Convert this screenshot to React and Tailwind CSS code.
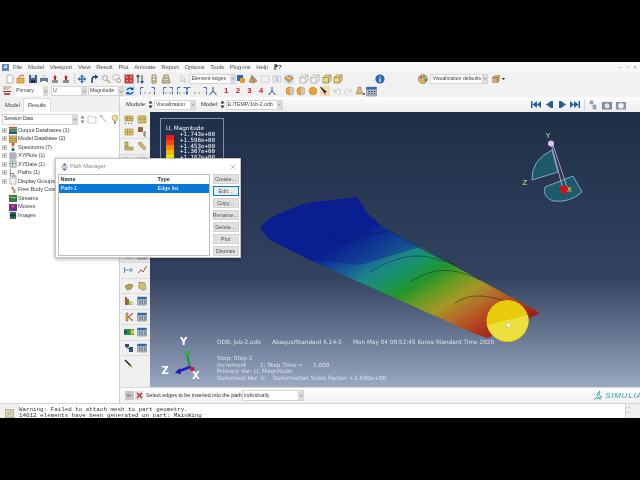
import React from "react";

const S = ({ w = 10, h = 10, children, className = "" }) => (
  <svg width={w} height={h} viewBox="0 0 10 10" className={"shrink-0 " + className}>{children}</svg>
);

const icons = {
  doc: <path d="M2 1h4l2 2v6H2z" fill="#fff" stroke="#9aa3ad" strokeWidth=".8" />,
  open: <><path d="M1 4h7v5H1z" fill="#f0b040" stroke="#c06a20" strokeWidth=".6" /><path d="M3 3c1-2 3-2 5-1" stroke="#c9302c" fill="none" strokeWidth=".9" /></>,
  save: <><path d="M1 1h8v8H1z" fill="#44618a" /><path d="M3 1h4v3H3z" fill="#cfd8e3" /><path d="M3 6h4v3H3z" fill="#20324e" /></>,
  print: <><path d="M1 4h8v4H1z" fill="#66788f" /><path d="M3 1h4v3H3z" fill="#ddd" /><path d="M3 7h4v2H3z" fill="#fff" /></>,
  upr: <><path d="M2 6h6v3H2z" fill="#8d8f96" /><path d="M5 1l2 2.500H6V6H4V3.500H3z" fill="#c62b2b" /></>,
  move: <path d="M5 .5L7 3H5.700v1.300H7V3l2.500 2L7 7V5.700H5.700V7H7L5 9.500 3 7h1.300V5.700H3V7L.5 5 3 3v1.300h1.300V3H3z" fill="#3d6ea8" />,
  rot: <><path d="M3 9V6c0-2 1.500-3.500 3.500-3.500" stroke="#143f7a" strokeWidth="1.500" fill="none" /><path d="M6 .5L9.500 3 6 5z" fill="#143f7a" /></>,
  mag: <><circle cx="4" cy="4" r="2.500" fill="#eef" stroke="#a5a5a5" /><path d="M6 6l3 3" stroke="#b7a270" strokeWidth="1.400" /></>,
  box: <><path d="M1 1h6v5H1z" fill="none" stroke="#b9b9c9" strokeWidth=".8" /><circle cx="6.500" cy="6.500" r="2" fill="#fff" stroke="#999" /></>,
  fit: <><path d="M.5.500h9v9h-9z" fill="#c93a3a" /><path d="M2 2l2 2M8 2L6 4M2 8l2-2M8 8L6 6" stroke="#fff" strokeWidth=".8" /></>,
  flip: <path d="M3 1v8M1.500 3L3 1l1.500 2M7 1v8M5.500 7L7 9l1.500-2" stroke="#34506e" strokeWidth="1.100" fill="none" />,
  col: <path d="M3 1h4M3 4h4M3 7h4M3 9h4M3 1v8M7 1v8" stroke="#8f7c3c" strokeWidth=".9" fill="none" />,
  col2: <path d="M3 1h4l2 8H1zM2.500 4h5M2 7h6" stroke="#8c8268" strokeWidth=".9" fill="#d9d3bd" />,
  cur: <path d="M3 1v7l2-1.500L6.500 9 7.500 8.500 6 6l2-.5z" fill="#eee" stroke="#b4b4b4" strokeWidth=".6" />,
  pal: <><path d="M1 1h6v6H1z" fill="#2d67ad" /><path d="M4 4h5v5H4z" fill="#e9a11f" /></>,
  hat: <><path d="M1 8l3-7 5 6-3 2z" fill="#c8a468" stroke="#8a6a38" strokeWidth=".5" /><path d="M3 4l4 4M4 2.500l4 4" stroke="#7f5a2a" strokeWidth=".6" /></>,
  dash: <path d="M1 2h8v6H1z" fill="none" stroke="#c1c6cc" strokeWidth=".9" strokeDasharray="1.500 .7" />,
  tb: <><path d="M1 2h8v6H1z" fill="#f5f5f5" stroke="#aeb4ba" strokeWidth=".7" /><path d="M3 4h4M3 6h4" stroke="#7b8aa0" strokeWidth=".7" /></>,
  pkg: <><path d="M0 0h10v10H0z" fill="#cfe4f4" /><path d="M.5 4L5 1.500 9.500 4 5 8.500z" fill="#d89a4a" stroke="#8e5c24" strokeWidth=".5" /><path d="M3 3l4 2" stroke="#f4e3bb" /></>,
  cube: <path d="M1 3.500L3.500 1H9v5.500L6.500 9H1zM1 3.500h5.500V9M6.500 3.500L9 1" fill="none" stroke="#a9b0a3" strokeWidth=".8" />,
  cubey: <><path d="M1 3.500L3.500 1H9v5.500L6.500 9H1z" fill="#e9d38d" /><path d="M1 3.500L3.500 1H9v5.500L6.500 9H1zM1 3.500h5.500V9M6.500 3.500L9 1" fill="none" stroke="#8e7a35" strokeWidth=".7" /></>,
  cubet: <><path d="M1 3.500L3.500 1H9v5.500L6.500 9H1z" fill="#c9ad7d" /><path d="M1 3.500h5.500V9M6.500 3.500L9 1" fill="none" stroke="#7e6338" strokeWidth=".7" /></>,
  info: <><circle cx="5" cy="5" r="4.600" fill="#2f66b3" /><path d="M5 2.200v1M5 4.200V8" stroke="#fff" strokeWidth="1.200" /></>,
  paint: <><circle cx="5" cy="5" r="4.500" fill="#d8b27c" stroke="#6d5a3a" strokeWidth=".5" /><circle cx="3" cy="3.500" r="1" fill="#d22" /><circle cx="6" cy="2.800" r="1" fill="#29a" /><circle cx="7.500" cy="6" r="1" fill="#262" /><circle cx="4" cy="7" r="1" fill="#ea2" /></>,
  view: <><path d="M1 1h8M1 3h6" stroke="#b9803a" strokeWidth=".9" /><path d="M1 5h8v1H1z" fill="#444" /><path d="M2 7h6v2H2z" fill="#d04a4a" /></>,
  sync: <><path d="M0 0h10v10H0z" fill="#cbe4f6" /><path d="M2 4c1-2 4-2.500 6-1M8 6c-1 2-4 2.500-6 1" stroke="#174d9b" strokeWidth="1.200" fill="none" /><path d="M8.500 1v3H5.500zM1.500 9V6h3z" fill="#174d9b" /></>,
  tri: <path d="M5 1v4M5 5L1.500 9M5 5l3.500 4" stroke="#395f96" strokeWidth="1.100" fill="none" />,
  ball: <><circle cx="5" cy="5" r="4" fill="#eea72a" stroke="#9c6a18" strokeWidth=".5" /><path d="M5 1a4 4 0 010 8z" fill="#c9c9c0" /></>,
  ball2: <circle cx="5" cy="5" r="3.800" fill="#efa325" stroke="#a76f14" strokeWidth=".5" />,
  pick: <><path d="M0 0h10v10H0z" fill="#f2dab4" /><path d="M1 1l6 5-2 .5 1 3-6-8.500z" fill="#222" /></>,
  undo: <path d="M2 3v3h3M2.500 5.500C4 2.500 7.500 2.500 8.500 5 9 7 7.500 8.500 6 9" stroke="#bebebe" fill="none" strokeWidth=".9" />,
  redo: <path d="M8 3v3H5M7.500 5.500C6 2.500 2.500 2.500 1.500 5 1 7 2.500 8.500 4 9" stroke="#cfcfcf" fill="none" strokeWidth=".9" />,
  bot: <><path d="M3 1h3v2l2 5H1l2-5z" fill="#d9b878" stroke="#8a7340" strokeWidth=".5" /><path d="M8 7h2v2H8z" fill="#7a6a3a" /></>,
  tab: <><path d="M.5 1h9v8h-9z" fill="#b6becb" stroke="#5e6c80" strokeWidth=".5" /><path d="M.5 1h9v2.200h-9z" fill="#2e6ab0" /><path d="M2 5h1.500M4.500 5H6M7 5h1.500M2 7h1.500M4.500 7H6M7 7h1.500" stroke="#3a3f49" strokeWidth=".9" /></>,
  m1: <><path d="M1 1h8v5H1z" fill="#e3c868" stroke="#7f6b21" strokeWidth=".5" /><path d="M1 3.500h8M3.500 1v5M6 1v5" stroke="#7f6b21" strokeWidth=".5" /><path d="M1 8.500h1M4 8.500h1M7 8.500h1" stroke="#555" /></>,
  m2: <><path d="M1 1h8v7H1z" fill="#e8cf76" stroke="#7f6b21" strokeWidth=".5" /><path d="M1 4h8M4 1v7M7 1v7" stroke="#7f6b21" strokeWidth=".5" /></>,
  m3: <><path d="M1 2h8v6H1z" fill="#ecd475" stroke="#7f6b21" strokeWidth=".5" /><path d="M1 5h8M3.500 2v6M6 2v6" stroke="#7f6b21" strokeWidth=".5" /></>,
  m4: <><path d="M1 0h5v5H1z" fill="#c94f3a" /><path d="M1 2.500h5" stroke="#3a8c3a" strokeWidth="1.500" /><path d="M7 5h2M7 7h2M7 9h2M7 5v4" stroke="#33595a" strokeWidth=".8" /></>,
  a1: <><path d="M1 1h3v7H1z" fill="#cdb769" stroke="#7a6b34" strokeWidth=".5" /><path d="M1 6h8v3H1z" fill="#cdb769" stroke="#7a6b34" strokeWidth=".5" /></>,
  a2: <path d="M1 2l3-1 5 6-2 2-5-5z" fill="#cdb769" stroke="#7a6b34" strokeWidth=".5" />,
  arr: <path d="M.5 2v6M1 5h7M6 3l2.500 2L6 7" stroke="#4c72a8" strokeWidth=".8" fill="none" />,
  ch: <><path d="M1 8l3-3 2 2 3-5" stroke="#c23a57" strokeWidth="1" fill="none" /><circle cx="4" cy="5" r=".8" fill="#2d9b3c" /><circle cx="9" cy="2" r=".8" fill="#2d9b3c" /></>,
  y1: <path d="M1 5l4-2 4 1-2 4-4 1z" fill="#b9a24a" stroke="#6b6025" strokeWidth=".5" />,
  y2: <path d="M2 1l6 1 1 6-3 1.500L2 7z" fill="#d8c05c" stroke="#5f7d98" strokeWidth=".6" />,
  leg: <><path d="M1 1h2v8H1z" fill="#e03a2a" /><path d="M3 3h2v6H3z" fill="#36a13a" /><path d="M5 5h2v4H5z" fill="#e9c82f" /><path d="M7 6h2v3H7z" fill="#eef" stroke="#5a7" strokeWidth=".4" /></>,
  k: <path d="M2 1h2v8H2zM4 5l4-4 1 1-4 3 4 3-1 1z" fill="#cdb163" stroke="#8d2a22" strokeWidth=".4" />,
  w: <><path d="M0 2h10v6H0z" fill="#2f9a45" /><path d="M0 3.500h3v3H0z" fill="#1d3e9b" /><path d="M7 2l3 1.500v3L7 8z" fill="#ddc934" /></>,
  bs: <><path d="M1 1h4v3H1z" fill="#2a4e82" /><path d="M5 4h4v5H5z" fill="#2c4f7e" /><path d="M2 4l3 2" stroke="#444" /></>,
  pen: <><path d="M1 1l6 6" stroke="#23262b" strokeWidth="1.600" /><path d="M6 6l3 2-2 1z" fill="#a5c24a" /></>,
};
const I = ({ k, s = 10 }) => <S w={s} h={s}>{icons[k]}</S>;

const Drop = ({ w, children, className = "" }) => (
  <div className={"flex items-center h-[10px] shrink-0 bg-white border border-[#d6d6d6] text-[#444] text-[5.200px] overflow-hidden " + w + " " + className}>
    <span className="flex-1 pl-[1px] whitespace-nowrap overflow-hidden">{children}</span>
    <span className="w-[5px] h-full bg-[#dcdcdc] flex items-center justify-center shrink-0">
      <svg width="4" height="3" viewBox="0 0 4 3"><path d="M.5.500L2 2.500 3.500.500" fill="none" stroke="#777" strokeWidth=".6" /></svg>
    </span>
  </div>
);
const Grip = ({ className = "" }) => <div className={"w-[1px] h-[9px] border-l border-dotted border-[#aaa] shrink-0 " + className} />;
const Spin = () => (
  <svg width="5" height="9" viewBox="0 0 5 9" className="shrink-0"><path d="M.5 3.500L2.500 .5l2 3zM.5 5.500l2 3 2-3z" fill="#333" /></svg>
);

const Bracket = ({ w, className = "" }) => (
  <svg width={w} height="10" viewBox={`0 0 ${w} 10`} className={"shrink-0 " + className}>
    <path d={`M.5 4V1.500h3M${w - 3.5} 1.500h3V4M.5 5v3.500M${w - .5} 5v3.500`} fill="none" stroke="#2a62a8" strokeWidth=".9" />
    <path d={`M${w / 2 - 3} 7h1.500M${w / 2 + 1.500} 7h1.500`} stroke="#555" strokeWidth=".8" />
  </svg>
);

const tree = [
  ["m1x", "Output Databases (1)", 1],
  ["m2x", "Model Database (2)", 1],
  ["spx", "Spectrums (7)", 1],
  ["xyp", "XYPlots (1)", 1],
  ["xyd", "XYData (1)", 1],
  ["pth", "Paths (1)", 1],
  ["dg", "Display Groups (1)", 1],
  ["fb", "Free Body Cuts", 0],
  ["st", "Streams", 0],
  ["mv", "Movies", 0],
  ["im", "Images", 0],
];
const treeIcons = {
  m1x: <><path d="M0 1h9v2H0z" fill="#c44" /><path d="M0 3h9v3H0z" fill="#3a9a4a" /><path d="M0 6h9v3H0z" fill="#2a4f8a" /></>,
  m2x: <><path d="M0 1h9v8H0z" fill="#d8bd62" stroke="#6b5a22" strokeWidth=".6" /><path d="M0 4h9M0 6.500h9" stroke="#6b5a22" strokeWidth=".6" /></>,
  spx: <><path d="M3 0h3v3H3z" fill="#d33" /><path d="M3 3h3v3H3z" fill="#dd3" /><path d="M3 6h3v3H3z" fill="#25a" /></>,
  xyp: <path d="M1 1h7v7H1zM1 3.300h7M1 5.600h7M3.300 1v7M5.600 1v7" fill="#eef" stroke="#5f6b78" strokeWidth=".6" />,
  xyd: <path d="M1 1h7v7H1zM1 4h7M4 1v7" fill="#e6ecef" stroke="#5f6b78" strokeWidth=".7" />,
  pth: <path d="M1.500 0v8h7M1.500 5h4v3" fill="none" stroke="#667" strokeWidth=".9" />,
  dg: <path d="M1 1h7v7H1z" fill="#eee" stroke="#555" strokeWidth=".6" strokeDasharray="1.500 .8" />,
  fb: <path d="M3 1h2v3H3zM5 4h2v4H5z" fill="#b49b5d" stroke="#705" strokeWidth=".2" />,
  st: <><path d="M0 1h9v8H0z" fill="#2f7a45" /><path d="M1 4c3-2 5 2 7 0" stroke="#e4d65c" fill="none" /></>,
  mv: <><path d="M0 1h9v8H0z" fill="#6b2fa5" /><path d="M3 2h3v3H3z" fill="#e24d2a" /></>,
  im: <><path d="M1 1h7v8H1z" fill="#2b6a55" /><path d="M1 5h7" stroke="#1a2f3a" strokeWidth="2" /></>,
};

const Row1 = () => (
  <div className="h-[13px] flex items-center pl-[5px]">
    <div className="flex items-center gap-[1.300px]">
      {["doc", "open", "save", "print", "upr", "upr"].map((k, i) => <I key={i} k={k} />)}
    </div>
    <Grip className="ml-[3px]" />
    <div className="flex items-center gap-[1.600px] ml-[2px]">
      {["move", "rot", "mag", "box", "fit", "flip"].map((k, i) => <I key={i} k={k} />)}
    </div>
    <div className="flex items-center gap-[2px] ml-[4px]"><I k="col" /><I k="col2" /></div>
    <div className="flex items-center gap-[1px] ml-[7px]">
      <I k="cur" />
      <Drop w="w-[47px]">Element edges</Drop>
    </div>
    <div className="flex items-center gap-[1.800px]">
      {["pal", "hat", "dash", "tb", "pkg"].map((k, i) => <I key={i} k={k} />)}
    </div>
    <div className="flex items-center gap-[1.600px] ml-[5px]">
      {["cube", "cube", "cubey", "cubey"].map((k, i) => <I key={i} k={k} />)}
    </div>
    <div className="ml-[32px]"><I k="info" /></div>
    <div className="flex items-center ml-[33px]">
      <I k="paint" />
      <Drop w="w-[58px]" className="ml-[2px]">Visualization defaults</Drop>
      <div className="ml-[3px]"><I k="cubet" /></div>
      <svg width="5" height="4" viewBox="0 0 5 4"><path d="M1 1h3L2.500 3z" fill="#111" /></svg>
    </div>
  </div>
);

const Row2 = () => (
  <div className="h-[12px] flex items-center pl-[2px]">
    <I k="view" />
    <Drop w="w-[33px]" className="ml-[3px] border-0">Primary</Drop>
    <Drop w="w-[36px]" className="ml-[3px]">U</Drop>
    <Drop w="w-[36px]" className="ml-[1px]">Magnitude</Drop>
    <div className="ml-[1px]"><I k="sync" /></div>
    <Bracket w={15} className="ml-[5px]" />
    <Bracket w={10} className="ml-[8px]" />
    <Bracket w={10} className="ml-[4px]" />
    <Bracket w={20} />
    <div className="ml-[1px]"><I k="tri" /></div>
    <div className="flex items-center ml-[2.500px] text-[8px] font-bold text-[#d11f2a]">
      {["1", "2", "3", "4"].map(t => <span key={t} className="w-[11.600px] text-center">{t}</span>)}
    </div>
    <I k="tri" />
    <div className="flex items-center gap-[1.600px] ml-[8px]">
      {["ball", "ball", "ball2"].map((k, i) => <I key={i} k={k} />)}
    </div>
    <div className="flex items-center gap-[1.500px] ml-[2px]">
      {["pick", "undo", "redo", "bot", "tab"].map((k, i) => <I key={i} k={k} s={k === "tab" ? 11 : 10} />)}
    </div>
  </div>
);

const Tri = ({ d }) => (
  <svg width="10" height="7" viewBox="0 0 10 7" className="shrink-0"><path d={d} fill="#2a5f9f" /></svg>
);

const ModuleRow = () => (
  <div className="h-[15px] flex items-center text-[5.800px] text-[#333] bg-gradient-to-b from-[#fdfdfd] to-[#ececec]">
    <span className="ml-[6px] w-[22px] shrink-0">Module:</span>
    <Spin />
    <Drop w="w-[42px]" className="ml-[1px]">Visualization</Drop>
    <span className="ml-[5px] w-[19px] shrink-0">Model:</span>
    <Spin />
    <Drop w="w-[57px]" className="ml-[0.500px]">E:/TEMP/Job-2.odb</Drop>
    <div className="flex items-center gap-[3.300px] ml-[248px]">
      <Tri d="M0 0h1.500v7H0zM6 0v7L1.500 3.500zM10 0v7L6 3.500z" />
      <Tri d="M7 0v7L2 3.500zM7 0h2v7H7z" />
      <Tri d="M2 0h2v7H2zM4 0l5 3.500L4 7z" />
      <Tri d="M0 0l4 3.500L0 7zM4 0l4.500 3.500L4 7zM8.500 0H10v7H8.500z" />
    </div>
    <div className="w-[1px] h-[11px] bg-[#d4d4d4] ml-[4px] shrink-0" />
    <div className="flex items-center gap-[4px] ml-[3px]">
      <S><path d="M2 1h3v3H2zM5 5h3v4H5z" fill="#a3adba" stroke="#778" strokeWidth=".5" /></S>
      <S><path d="M0 2h10v7.500H0z" fill="#7d8ba0" /><circle cx="5" cy="5.700" r="2.500" fill="#dfe5ec" /></S>
      <S><path d="M0 2h10v7.500H0z" fill="#8a94a3" /><circle cx="5" cy="5.700" r="2.800" fill="#eef1f5" /></S>
    </div>
  </div>
);

const LeftPanel = () => (
  <div className="w-[120px] h-[306px] flex flex-col text-[5.700px] tracking-[-0.150px] text-[#444] border-r border-[#cfcfcf] bg-[#f0f0f0]">
    <div className="h-[15px] flex items-end pl-[1px]">
      <div className="h-[13px] px-[4px] flex items-center w-[21px]">Model</div>
      <div className="h-[14px] px-[4px] ml-[1px] flex items-center bg-white border border-b-0 border-[#ddd]">Results</div>
    </div>
    <div className="flex-1 bg-white flex flex-col">
      <div className="h-[14px] flex items-center pl-[2px] shrink-0">
        <Drop w="w-[76px]" className="h-[11px]">Session Data</Drop>
        <div className="ml-[2px] opacity-60"><Spin /></div>
        <S className="ml-[2px]"><path d="M1 2h3l1 1h4v6H1z" fill="none" stroke="#bbb" strokeWidth=".8" /></S>
        <S className="ml-[1px]"><path d="M2 1l6 7M2 3l3-2" stroke="#aaa" strokeWidth="1" fill="none" /></S>
        <S className="ml-[2px]"><circle cx="5" cy="4" r="3" fill="#e7df8b" stroke="#8d8a4a" strokeWidth=".5" /><path d="M4 7.500h2v2H4z" fill="#666" /></S>
      </div>
      <div className="flex flex-col">
        {tree.map(([k, label, exp]) => (
          <div key={label} className="h-[8.500px] flex items-center whitespace-nowrap">
            <div className="w-[9px] flex justify-center shrink-0">
              {exp ? (
                <svg width="5" height="5" viewBox="0 0 5 5"><path d="M.5.500h4v4h-4z" fill="#fff" stroke="#999" strokeWidth=".6" /><path d="M1 2.500h3M2.500 1v3" stroke="#555" strokeWidth=".5" /></svg>
              ) : null}
            </div>
            <svg width="8" height="8" viewBox="0 0 9 9" className="shrink-0">{treeIcons[k]}</svg>
            <span className="ml-[1px]">{label}</span>
          </div>
        ))}
      </div>
    </div>
  </div>
);

const Pair = ({ a, b, h = "h-[15.500px]", line = true }) => (
  <div className={"flex items-center justify-center gap-[3px] shrink-0 " + h + (line ? " border-b border-[#dcdcdc]" : "")}>
    <I k={a} />
    {b ? <I k={b} /> : <div className="w-[10px]" />}
  </div>
);

const Toolbox = () => (
  <div className="w-[30px] flex flex-col bg-[#f0f0f0] pt-[1px] pl-[1px]">
    <Pair a="m1" b="m2" h="h-[13px]" line={false} />
    <Pair a="m3" b="m4" h="h-[13px]" />
    {["a1", "a1", "m3", "m3", "tab", "tab", "tab", "m2"].map((k, i) => (
      <Pair key={i} a={k} b={i % 2 ? "tab" : "a2"} />
    ))}
    <Pair a="arr" b="ch" />
    <Pair a="y1" b="y2" />
    <Pair a="leg" b="tab" />
    <Pair a="k" b="tab" />
    <Pair a="w" b="tab" />
    <Pair a="bs" b="tab" />
    <Pair a="pen" line={false} />
  </div>
);

const Viewport = () => (
  <div className="relative flex-1 h-[275px] overflow-hidden bg-gradient-to-b from-[#1f2e49] via-[#33435f] via-60% to-[#9aa8c2] font-['DejaVu_Sans',sans-serif]">
    <svg width="490" height="275" viewBox="150 112 490 275" className="absolute left-0 top-0">
      <defs>
        <linearGradient id="fem" gradientUnits="userSpaceOnUse" x1="310" y1="260" x2="393" y2="400">
          <stop offset="0" stopColor="#0a22a6" />
          <stop offset=".06" stopColor="#0f3aa8" />
          <stop offset=".16" stopColor="#1a64ab" />
          <stop offset=".26" stopColor="#1f9a9c" />
          <stop offset=".36" stopColor="#1cab6e" />
          <stop offset=".46" stopColor="#28ad2b" />
          <stop offset=".56" stopColor="#78b422" />
          <stop offset=".66" stopColor="#bfb024" />
          <stop offset=".76" stopColor="#d47c28" />
          <stop offset=".88" stopColor="#cf451b" />
          <stop offset="1" stopColor="#b81d13" />
        </linearGradient>
        <pattern id="msh" width="1.800" height="1.800" patternUnits="userSpaceOnUse" patternTransform="rotate(27)">
          <path d="M0 0h1.800M0 0v1.800" stroke="#081028" strokeWidth=".6" fill="none" />
        </pattern>
      </defs>
      <path d="M260 228L267 220Q285 210 307 203L357 197L367 213L383 227L540 313L488 338L473 333L310 260L270 240Z" fill="url(#fem)" />
      <path d="M260 228L267 220Q285 210 307 203L357 197L367 213L383 227L420 247L360 265L310 260L270 240Z" fill="#0a1fa0" opacity=".4" />
      <path d="M260 228L267 220Q285 210 307 203L357 197L367 213L383 227L540 313L488 338L473 333L310 260L270 240Z" fill="url(#msh)" opacity=".5" />
      <path d="M325 235l20 8 20-8 25-4 35 20 30 14M370 272c30-18 50-20 75-10M410 282c25-16 45-14 70-2M455 303c15-10 30-8 50-2" stroke="#0a1a30" strokeWidth=".8" fill="none" opacity=".55" />

      <circle cx="507.500" cy="321" r="21" fill="#e6cc0a" />
      <path d="M487 325L528 315A21 21 0 01487 325Z" fill="#ece03c" />
      <path d="M507 322v6l1.500-1.500 1 2.500 1-.5-1-2.500h2z" fill="#fff" stroke="#888" strokeWidth=".3" />

      <path d="M552 150L558 172L532 180Q531 160 552 150Z" fill="#1f5a6c" stroke="#a8cfe0" strokeWidth=".7" />
      <path d="M573 176L582 192Q570 203 553 201Q542 197 545 187L563 180Z" fill="#1f5a6c" stroke="#a8cfe0" strokeWidth=".7" />
      <path d="M551 143L563 189M553 145L567 187" stroke="#cbb8e0" strokeWidth=".8" />
      <circle cx="551" cy="143.500" r="3" fill="#dcc3f2" />
      <rect x="560.500" y="186" width="7" height="7" fill="#e00d0d" />
      <text x="546" y="138" fontSize="7" fill="#e8e36a">Y</text>
      <text x="522.500" y="185" fontSize="7" fill="#e8e36a">Z</text>
      <text x="567" y="192" fontSize="7" fill="#e8e36a">X</text>

      <path d="M190 367L187 354" stroke="#1f9a3a" strokeWidth="2.500" />
      <circle cx="187" cy="353" r="2.200" fill="#2fb54a" />
      <path d="M190 367L177 372" stroke="#1a1fbf" strokeWidth="2.500" />
      <path d="M180 368L175 373L181 374Z" fill="#1a1fbf" />
      <path d="M190 367L193 370" stroke="#c01d3a" strokeWidth="2.500" />
      <circle cx="192.500" cy="369" r="2.200" fill="#c81d3f" />
      <text x="180" y="345" fontSize="10" fontWeight="bold" fill="#fff">Y</text>
      <text x="161.500" y="374" fontSize="10" fontWeight="bold" fill="#fff">Z</text>
      <text x="192" y="379" fontSize="10" fontWeight="bold" fill="#fff">X</text>
    </svg>

    <div className="absolute left-[10px] top-[6px] w-[64px] h-[60px] border border-[#7f8fa8] text-white">
      <div className="ml-[5px] mt-[5px] text-[5.700px] leading-[8px]">U, Magnitude</div>
      <div className="flex ml-[5px] mt-[3px]">
        <div className="w-[8px] flex flex-col shrink-0">
          <div className="h-[5px] bg-[#ee1c1c]" />
          <div className="h-[5px] bg-[#f7470a]" />
          <div className="h-[5px] bg-[#f9870a]" />
          <div className="h-[5px] bg-[#f6b50c]" />
          <div className="h-[5px] bg-[#e7ee0d]" />
        </div>
        <div className="ml-[6px] mt-[-3px] font-['DejaVu_Sans_Mono',monospace] text-[5.800px] leading-[5.800px]">
          <div>+1.743e+00</div>
          <div>+1.598e+00</div>
          <div>+1.453e+00</div>
          <div>+1.307e+00</div>
          <div>+1.162e+00</div>
        </div>
      </div>
    </div>

    <div className="absolute left-[67px] top-[227px] text-[#dbe0ea] text-[5.750px] leading-[6.400px] whitespace-nowrap">
      <div className="flex">
        <span className="w-[55px]">ODB: Job-2.odb</span>
        <span className="w-[81px]">Abaqus/Standard 6.14-5</span>
        <span>Mon May 04 08:52:45 Korea Standard Time 2020</span>
      </div>
      <div className="mt-[10px]">Step: Step-1</div>
      <div className="flex">
        <span className="w-[43px]">Increment</span>
        <span className="w-[53px]">1: Step Time =</span>
        <span>1.000</span>
      </div>
      <div>Primary Var: U, Magnitude</div>
      <div className="flex">
        <span className="w-[56px]">Deformed Var: U</span>
        <span>Deformation Scale Factor: +1.690e+00</span>
      </div>
    </div>
  </div>
);

const Prompt = () => (
  <div className="h-[16px] flex items-center pl-[5px] text-[5.350px] text-[#333] bg-gradient-to-b from-[#fdfdfd] to-[#f0f0f0] border-t border-[#d8d8d8]">
    <div className="w-[9px] h-[9px] bg-[#c6c6c6] flex items-center justify-center shrink-0">
      <svg width="7" height="7" viewBox="0 0 7 7"><path d="M1 3.500h5M3 1.500l-2 2 2 2" stroke="#8a8a8a" fill="none" /></svg>
    </div>
    <div className="w-[8px] h-[9px] ml-[1px] bg-[#dedede] flex items-center justify-center shrink-0">
      <svg width="7" height="7" viewBox="0 0 7 7"><path d="M1 1l5 5M6 1L1 6" stroke="#d11f2a" strokeWidth="1.200" /></svg>
    </div>
    <span className="ml-[3px] w-[96px] shrink-0 whitespace-nowrap">Select edges to be inserted into the path</span>
    <Drop w="w-[62px]" className="h-[11px]">individually</Drop>
    <div className="ml-auto flex items-center w-[47px] shrink-0 overflow-hidden">
      <svg width="11" height="11" viewBox="0 0 11 11" className="shrink-0"><path d="M1 10l4-4-1-2 3-3M7 1L6 5l3 2-4 1M3 8l5 1" stroke="#2aa79b" strokeWidth=".8" fill="none" /></svg>
      <span className="ml-[1px] italic text-[8px] text-[#2aa79b] tracking-[.8px] whitespace-nowrap">SIMULIA</span>
    </div>
  </div>
);

const Message = () => (
  <div className="h-[15px] flex bg-white border-t border-[#d4d4d4] overflow-hidden">
    <div className="w-[19px] h-full bg-[#f0f0f0] flex items-start justify-center pt-[5px] shrink-0">
      <S w={9} h={9}><path d="M0 0h10v10H0z" fill="#d6ceb2" stroke="#777" strokeWidth=".6" /><path d="M3 7l4-4" stroke="#8a6" /></S>
    </div>
    <div className="flex-1 font-['Liberation_Mono',monospace] text-[5.870px] leading-[6px] pt-[2.500px] text-[#333] whitespace-nowrap">
      <div>Warning: Failed to attach mesh to part geometry.</div>
      <div>14612 elements have been generated on part: MainWing</div>
    </div>
    <div className="w-[7px] h-full bg-[#f0f0f0] border-l border-[#ccc] flex flex-col items-center pt-[2px] gap-[2px] shrink-0">
      <svg width="4" height="3" viewBox="0 0 4 3"><path d="M.5 2.500L2 .5l1.500 2" fill="none" stroke="#aaa" strokeWidth=".6" /></svg>
      <svg width="4" height="3" viewBox="0 0 4 3"><path d="M.5.500L2 2.500l1.500-2" fill="none" stroke="#aaa" strokeWidth=".6" /></svg>
    </div>
    <div className="w-[8px] bg-[#f0f0f0] shrink-0" />
  </div>
);

const PathManager = () => (
  <div className="absolute left-[55px] top-[158px] w-[186px] h-[100px] bg-white border border-[#c4c4c4] shadow-[0_1px_4px_rgba(0,0,0,.35)] flex flex-col px-[1.500px] text-[5.500px] text-[#444]">
    <div className="h-[15px] flex items-center pl-[3px] shrink-0">
      <svg width="7" height="8" viewBox="0 0 7 8" className="shrink-0"><path d="M3.500 0L6 2.500H1zM3.500 8L1 5.500h5z" fill="#4a6fa8" /><path d="M0 3.500h7v1H0z" fill="#9a9ab4" /></svg>
      <span className="ml-[2.500px] text-[#888] text-[5.700px]">Path Manager</span>
      <svg width="6" height="6" viewBox="0 0 6 6" className="ml-auto mr-[3px]"><path d="M.5.500l5 5M5.500.500l-5 5" stroke="#aaa" strokeWidth=".7" /></svg>
    </div>
    <div className="flex flex-1 pb-[1.500px] gap-[3px]">
      <div className="w-[152px] border border-[#bdbdbd] bg-white">
        <div className="h-[9px] flex items-center font-bold text-[#333]">
          <span className="pl-[2px] w-[99px]">Name</span><span>Type</span>
        </div>
        <div className="h-[9px] flex items-center bg-[#0a78d6] text-white">
          <span className="pl-[2px] w-[99px]">Path-1</span><span>Edge list</span>
        </div>
      </div>
      <div className="w-[26px] flex flex-col gap-[2px] text-[#555]">
        {["Create...", "Edit...", "Copy...", "Rename...", "Delete...", "Plot", "Dismiss"].map((t, i) => (
          <div key={t} className={"h-[10px] flex items-center justify-center bg-[#e1e1e1] whitespace-nowrap " + (i === 1 ? "border border-[#0a78d6] bg-[#eaeaea]" : "border border-[#d2d2d2]")}>{t}</div>
        ))}
      </div>
    </div>
  </div>
);

export default function App() {
  return (
    <div className="relative w-[640px] h-[480px] bg-black overflow-hidden flex flex-col font-['Liberation_Sans',sans-serif] blur-[0.4px]">
      <div className="h-[62px] shrink-0" />
      <div className="h-[356px] shrink-0 flex flex-col bg-[#f1f1f1] overflow-hidden">
        <div className="h-[10px] flex items-center pl-[2px] text-[6px] tracking-[-0.100px] text-[#555] bg-[#f7f7f7] shrink-0">
          <svg width="7" height="7" viewBox="0 0 7 7" className="mr-[4px] shrink-0"><path d="M0 0h7v7H0z" fill="#5d88c0" /><path d="M2 2h3M2 3.500h3" stroke="#fff" /></svg>
          <div className="flex items-center gap-[5.800px]">
            {["File", "Model", "Viewport", "View", "Result", "Plot", "Animate", "Report", "Options", "Tools", "Plug-ins", "Help"].map(t => <span key={t}>{t}</span>)}
            <span className="font-bold text-[#334]">⁋?</span>
          </div>
          <div className="ml-auto flex items-center gap-[5px] pr-[3px] text-[#888] text-[6px]"><span>–</span><span>▫</span><span>×</span></div>
        </div>
        <div className="shrink-0"><Row1 /></div>
        <div className="shrink-0"><Row2 /></div>
        <div className="flex shrink-0">
          <LeftPanel />
          <div className="flex-1 flex flex-col">
            <ModuleRow />
            <div className="flex">
              <Toolbox />
              <Viewport />
            </div>
            <Prompt />
          </div>
        </div>
        <Message />
      </div>
      <PathManager />
    </div>
  );
}
